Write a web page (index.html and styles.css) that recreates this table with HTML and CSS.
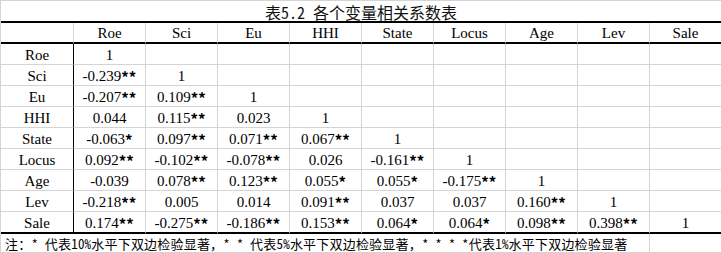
FILE: index.html
```html
<!DOCTYPE html>
<html lang="zh">
<head>
<meta charset="utf-8">
<title>表5.2 各个变量相关系数表</title>
<link rel="stylesheet" href="styles.css">
</head>
<body>
<div class="sheet">
  <div class="c title">表5.2 各个变量相关系数表</div>

  <div class="c h"></div><div class="c h">Roe</div><div class="c h">Sci</div><div class="c h">Eu</div><div class="c h">HHI</div><div class="c h">State</div><div class="c h">Locus</div><div class="c h">Age</div><div class="c h">Lev</div><div class="c h e">Sale</div>

  <div class="c lab">Roe</div><div class="c">1</div><div class="c"></div><div class="c"></div><div class="c"></div><div class="c"></div><div class="c"></div><div class="c"></div><div class="c"></div><div class="c e"></div>

  <div class="c lab">Sci</div><div class="c">-0.239<span class="st">**</span></div><div class="c">1</div><div class="c"></div><div class="c"></div><div class="c"></div><div class="c"></div><div class="c"></div><div class="c"></div><div class="c e"></div>

  <div class="c lab">Eu</div><div class="c">-0.207<span class="st">**</span></div><div class="c">0.109<span class="st">**</span></div><div class="c">1</div><div class="c"></div><div class="c"></div><div class="c"></div><div class="c"></div><div class="c"></div><div class="c e"></div>

  <div class="c lab">HHI</div><div class="c">0.044</div><div class="c">0.115<span class="st">**</span></div><div class="c">0.023</div><div class="c">1</div><div class="c"></div><div class="c"></div><div class="c"></div><div class="c"></div><div class="c e"></div>

  <div class="c lab">State</div><div class="c">-0.063<span class="st">*</span></div><div class="c">0.097<span class="st">**</span></div><div class="c">0.071<span class="st">**</span></div><div class="c">0.067<span class="st">**</span></div><div class="c">1</div><div class="c"></div><div class="c"></div><div class="c"></div><div class="c e"></div>

  <div class="c lab">Locus</div><div class="c">0.092<span class="st">**</span></div><div class="c">-0.102<span class="st">**</span></div><div class="c">-0.078<span class="st">**</span></div><div class="c">0.026</div><div class="c">-0.161<span class="st">**</span></div><div class="c">1</div><div class="c"></div><div class="c"></div><div class="c e"></div>

  <div class="c lab">Age</div><div class="c">-0.039</div><div class="c">0.078<span class="st">**</span></div><div class="c">0.123<span class="st">**</span></div><div class="c">0.055<span class="st">*</span></div><div class="c">0.055<span class="st">*</span></div><div class="c">-0.175<span class="st">**</span></div><div class="c">1</div><div class="c"></div><div class="c e"></div>

  <div class="c lab">Lev</div><div class="c">-0.218<span class="st">**</span></div><div class="c">0.005</div><div class="c">0.014</div><div class="c">0.091<span class="st">**</span></div><div class="c">0.037</div><div class="c">0.037</div><div class="c">0.160<span class="st">**</span></div><div class="c">1</div><div class="c e"></div>

  <div class="c lab b">Sale</div><div class="c b">0.174<span class="st">**</span></div><div class="c b">-0.275<span class="st">**</span></div><div class="c b">-0.186<span class="st">**</span></div><div class="c b">0.153<span class="st">**</span></div><div class="c b">0.064<span class="st">*</span></div><div class="c b">0.064<span class="st">*</span></div><div class="c b">0.098<span class="st">**</span></div><div class="c b">0.398<span class="st">**</span></div><div class="c b e">1</div>

  <div class="c note">注：* 代表10%水平下双边检验显著，* * 代表5%水平下双边检验显著，* * * *代表1%水平下双边检验显著</div><div class="c n e"></div>
</div>
</body>
</html>
```

FILE: styles.css
```css
html, body {
  margin: 0;
  padding: 0;
  background: #ffffff;
  overflow: hidden;
}

.sheet {
  box-sizing: border-box;
  width: 721px;
  display: grid;
  grid-template-columns: 73px repeat(8, 72px) 71px;
  border-top: 1px solid #d4d4d4;
  border-left: 1px solid #d4d4d4;
  font-family: "Liberation Serif", "Times New Roman", serif;
  font-size: 15px;
  color: #000000;
}

.c {
  box-sizing: border-box;
  height: 21px;
  border-right: 1px solid #d4d4d4;
  border-bottom: 1px solid #d4d4d4;
  display: flex;
  align-items: flex-end;
  justify-content: center;
  line-height: 17px;
  white-space: nowrap;
  overflow: visible;
}

.c.e {
  border-right: 0;
}

.title {
  grid-column: 1 / -1;
  height: 22px;
  border-right: 0;
  border-bottom: 2px solid #000000;
  font-family: "Noto Sans Mono CJK SC", "Noto Sans CJK SC", sans-serif;
  font-weight: 300;
  font-size: 16px;
  line-height: 18px;
  color: #111111;
}

.h {
  border-bottom: 2px solid #000000;
}

.lab {
  border-right-color: #000000;
}

.b {
  height: 22px;
  border-bottom: 2px solid #000000;
}

.st {
  font-family: "Noto Sans Mono CJK SC", "Liberation Mono", monospace;
  font-size: 15px;
  font-weight: 700;
}

.note {
  grid-column: 1 / 10;
  height: 19px;
  justify-content: flex-start;
  padding-left: 4px;
  font-family: "Noto Sans Mono CJK SC", "Noto Sans CJK SC", sans-serif;
  font-weight: 300;
  font-size: 13px;
  letter-spacing: 0.2px;
  line-height: 17px;
}

.n {
  height: 19px;
}
```
